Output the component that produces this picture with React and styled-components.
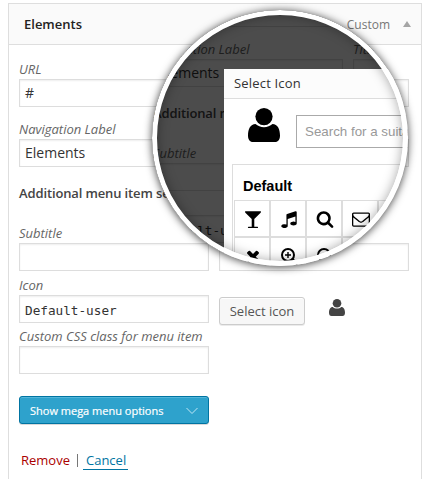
import React from "react";
import styled, { createGlobalStyle, css } from "styled-components";

const GlobalStyle = createGlobalStyle`
  * { box-sizing: border-box; }
  html, body { margin: 0; padding: 0; overflow: hidden; background: #fff; }
  body { font-family: "Open Sans", sans-serif; color: #333; }
`;

const Page = styled.main`
  position: relative;
  width: 427px;
  height: 479px;
  padding: 3px 0 0 8px;
  overflow: hidden;
`;

const Panel = styled.section`
  width: 414px;
  height: 490px;
  border: 1px solid #dedede;
  background: #fff;
`;

const PanelHeader = styled.header`
  display: flex;
  align-items: center;
  height: 41px;
  padding: 0 10px 0 15px;
  background: #fafafa;
  border-bottom: 1px solid #dedede;
`;

const PanelTitle = styled.h2`
  flex: 1;
  margin: 0;
  font-size: 13px;
  font-weight: 600;
  color: #222;
`;

const PanelType = styled.span`
  font-size: 12px;
  color: #777;
`;

const Caret = styled.span`
  margin-left: 13px;
  border: 4px solid transparent;
  border-top: 0;
  border-bottom: 6px solid #a5a5a5;
`;

const Form = styled.div`
  display: flex;
  flex-direction: column;
  padding: 14px 0 0 10px;
`;

const Row = styled.div`
  display: grid;
  grid-template-columns: 190px 190px;
  column-gap: 10px;
  height: ${(p) => p.$height}px;
`;

const Label = styled.label`
  display: block;
  height: 20px;
  font-size: 13px;
  font-style: italic;
  line-height: 20px;
  white-space: nowrap;
  color: #666;
`;

const TextBox = styled.div`
  height: 28px;
  padding-left: 5px;
  border: 1px solid #ddd;
  box-shadow: inset 0 1px 2px rgba(0, 0, 0, 0.07);
  font-size: 14px;
  line-height: 26px;
  color: #333;
  ${(p) => p.$mono && css`
    font-family: "DejaVu Sans Mono", monospace;
    font-size: 12.7px;
    line-height: 29px;
  `}
`;

const SectionTitle = styled.h3`
  height: 40px;
  margin: 0;
  font-size: 13px;
  font-weight: 600;
  letter-spacing: -0.13px;
  line-height: 20px;
  white-space: nowrap;
  color: #444;
`;

const PickerCell = styled.div`
  display: flex;
  align-items: flex-start;
  padding-top: 22px;
`;

const SelectButton = styled.button`
  width: 86px;
  height: 28px;
  padding: 0;
  border: 1px solid #ccc;
  border-radius: 3px;
  background: #f7f7f7;
  box-shadow: inset 0 1px 0 #fff, 0 1px 0 rgba(0, 0, 0, 0.08);
  font: 13px "Open Sans", sans-serif;
  color: #555;
`;

const PickedIcon = styled.div`
  margin: 2px 0 0 24px;
  color: #444;
  svg { display: block; }
`;

const Actions = styled.div`
  display: flex;
  flex-direction: column;
  padding-left: 10px;
`;

const MegaButton = styled.button`
  display: flex;
  align-items: center;
  justify-content: space-between;
  width: 190px;
  height: 28px;
  padding: 1px 10px 0;
  border: 1px solid #0074a2;
  border-radius: 3px;
  background: #2ea2cc;
  box-shadow: inset 0 1px 0 rgba(120, 200, 230, 0.5), 0 1px 0 rgba(0, 0, 0, 0.15);
  font: 500 11px "Open Sans", sans-serif;
  -webkit-text-stroke: 0.2px #fff;
  color: #fff;
`;

const Links = styled.div`
  display: flex;
  align-items: baseline;
  margin-top: 27px;
  padding-left: 2px;
  font-size: 13px;
  line-height: 18px;
`;

const RemoveLink = styled.a`
  color: #a00;
`;

const Divider = styled.span`
  align-self: center;
  width: 1px;
  height: 13px;
  margin: 0 5px 0 7px;
  background: #777;
`;

const CancelLink = styled.a`
  padding: 0 2px 0 3px;
  border-bottom: 1px solid #0074a2;
  color: #0074a2;
`;

const Lens = styled.div`
  position: absolute;
  left: 152px;
  top: 10px;
  width: 256px;
  height: 256px;
  border-radius: 50%;
  overflow: hidden;
  background: #fff;
`;

const LensShadow = styled.div`
  position: absolute;
  left: 152px;
  top: 10px;
  width: 256px;
  height: 256px;
  border-radius: 50%;
  box-shadow: 0 1px 8px rgba(0, 0, 0, 0.75);
`;

const LensRing = styled.div`
  position: absolute;
  inset: 0;
  border: 5px solid #fff;
  border-radius: 50%;
  box-shadow: inset 0 0 12px rgba(0, 0, 0, 0.35);
`;

/* The page behind the dialog, scrolled and shifted under the lens. */
const Backdrop = styled.div`
  position: absolute;
  left: -9px;
  top: -45px;
  width: 414px;
`;

const Dim = styled.div`
  position: absolute;
  inset: 0;
  background: rgba(0, 0, 0, 0.7);
`;

const Dialog = styled.div`
  position: absolute;
  left: 72px;
  top: 59px;
  width: 300px;
  height: 240px;
  background: #fff;
`;

const DialogHeader = styled.div`
  height: 30px;
  padding-left: 10px;
  border-bottom: 1px solid #ddd;
  background: #fcfcfc;
  font-size: 13px;
  font-weight: 500;
  letter-spacing: 0.18px;
  line-height: 29px;
  color: #333;
`;

const DialogSearch = styled.div`
  display: flex;
  padding: 6px 0 0 24px;
  height: 65px;
  svg { display: block; margin-top: 3px; color: #000; }
`;

const SearchBox = styled.div`
  width: 200px;
  height: 33px;
  margin: 10px 0 0 16px;
  padding-left: 8px;
  border: 1px solid #aaa;
  font: 13.33px/31px "Liberation Sans", Arial, sans-serif;
  color: #999;
  white-space: nowrap;
`;

const IconGroup = styled.div`
  width: 280px;
  height: 150px;
  margin-left: 8px;
  padding: 0 0 0 1px;
  border: 1px solid #ddd;
`;

const GroupTitle = styled.div`
  height: 35px;
  padding: 1px 0 0 9px;
  font: bold 14.5px/41px "Liberation Sans", Arial, sans-serif;
  color: #000;
`;

const IconGrid = styled.div`
  display: grid;
  grid-template-columns: repeat(5, 36px);
  grid-auto-rows: 37px;
  width: 181px;
  border-top: 1px solid #ddd;
  border-left: 1px solid #ddd;
`;

const IconCell = styled.div`
  display: flex;
  align-items: center;
  justify-content: center;
  padding: 1px 0 0 1px;
  border-right: 2px solid #ddd;
  border-bottom: 2px solid #ddd;
  color: #000;
`;

const PATHS = {
  glass: "M1699 186q0 35-43 78l-632 632v768h320q26 0 45 19t19 45-19 45-45 19h-896q-26 0-45-19t-19-45 19-45 45-19h320v-768l-632-632q-43-43-43-78 0-23 18-36.5t38-17.5 43-4h1408q23 0 43 4t38 17.5 18 36.5z",
  music: "M1664 224v1120q0 50-34 89t-86 60.5-103.5 32-96.5 10.5-96.5-10.5-103.5-32-86-60.5-34-89 34-89 86-60.5 103.5-32 96.5-10.5q105 0 192 39v-537l-768 237v709q0 50-34 89t-86 60.5-103.5 32-96.5 10.5-96.5-10.5-103.5-32-86-60.5-34-89 34-89 86-60.5 103.5-32 96.5-10.5q105 0 192 39v-967q0-31 19-56.5t49-35.5l832-256q12-4 28-4 40 0 68 28t28 68z",
  search: "M1216 832q0-185-131.5-316.5t-316.5-131.5-316.5 131.5-131.5 316.5 131.5 316.5 316.5 131.5 316.5-131.5 131.5-316.5zm512 832q0 52-38 90t-90 38q-54 0-90-38l-343-342q-179 124-399 124-143 0-273.5-55.5t-225-150-150-225-55.5-273.5 55.5-273.5 150-225 225-150 273.5-55.5 273.5 55.5 225 150 150 225 55.5 273.5q0 220-124 399l343 343q37 37 37 90z",
  envelope: "M1664 1504v-768q-32 36-69 66-268 206-426 338-51 43-83 67t-86.5 48.5-102.5 24.5h-2q-48 0-102.5-24.5t-86.5-48.5-83-67q-158-132-426-338-37-30-69-66v768q0 13 9.5 22.5t22.5 9.5h1472q13 0 22.5-9.5t9.5-22.5zm0-1051v-24.5l-.5-13-3-12.5-5.5-9-9-7.5-14-2.5h-1472q-13 0-22.5 9.5t-9.5 22.5q0 168 147 284 193 152 401 317 6 5 35 29.5t46 37.5 44.5 31.5 50.5 27.5 43 9h2q20 0 43-9t50.5-27.5 44.5-31.5 46-37.5 35-29.5q208-165 401-317 54-43 100.5-115.5t46.5-131.5zm128-37v1088q0 66-47 113t-113 47h-1472q-66 0-113-47t-47-113v-1088q0-66 47-113t113-47h1472q66 0 113 47t47 113z",
  times: "M1490 1322q0 40-28 68l-136 136q-28 28-68 28t-68-28l-294-294-294 294q-28 28-68 28t-68-28l-136-136q-28-28-28-68t28-68l294-294-294-294q-28-28-28-68t28-68l136-136q28-28 68-28t68 28l294 294 294-294q28-28 68-28t68 28l136 136q28 28 28 68t-28 68l-294 294 294 294q28 28 28 68z",
};

function Icon({ name, size }) {
  return (
    <svg width={size} height={size} viewBox="0 0 1792 1792" fill="currentColor">
      <path d={PATHS[name]} />
    </svg>
  );
}

function UserIcon({ width }) {
  return (
    <svg width={width} height={(width * 34) / 32} viewBox="0 0 32 34" fill="currentColor">
      <circle cx="16" cy="8.6" r="8.6" />
      <path d="M7.5 16C9.800 18 12.700 19.200 16 19.200S22.200 18 24.500 16C29.500 16 32 21 32 27.500C32 31.500 30.200 34 27 34H5C1.800 34 0 31.500 0 27.500C0 21 2.500 16 7.500 16Z" />
    </svg>
  );
}

function ZoomIcon({ plus }) {
  return (
    <svg width="18" height="18" viewBox="0 0 18 18" fill="none" stroke="currentColor" strokeWidth="2">
      <circle cx="8" cy="8" r="6" />
      <path d="M12.5 12.5l4 4" strokeWidth="2.6" strokeLinecap="round" />
      <path d={plus ? "M5 8h6M8 5v6" : "M5 8h6"} strokeWidth="1.4" />
    </svg>
  );
}

function Field({ label, value, mono }) {
  return (
    <div>
      <Label>{label}</Label>
      <TextBox $mono={mono}>{value}</TextBox>
    </div>
  );
}

function MenuItemForm({ url, titleAttribute }) {
  return (
    <Form>
      <Row $height={60}>
        <Field label={url && "URL"} value={url} />
        <Field />
      </Row>
      <Row $height={64}>
        <Field label="Navigation Label" value="Elements" />
        <Field label={titleAttribute} />
      </Row>
      <SectionTitle>Additional menu item settings</SectionTitle>
      <Row $height={52}>
        <Field label="Subtitle" />
        <Field />
      </Row>
      <Row $height={51}>
        <Field label={url && "Icon"} value="Default-user" mono />
        {url && (
          <PickerCell>
            <SelectButton>Select icon</SelectButton>
            <PickedIcon><UserIcon width={16} /></PickedIcon>
          </PickerCell>
        )}
      </Row>
      {url && (
        <Row $height={70}>
          <Field label="Custom CSS class for menu item" />
        </Row>
      )}
    </Form>
  );
}

export default function App() {
  return (
    <>
      <GlobalStyle />
      <Page>
        <Panel>
          <PanelHeader>
            <PanelTitle>Elements</PanelTitle>
            <PanelType>Custom</PanelType>
            <Caret />
          </PanelHeader>
          <MenuItemForm url="#" />
          <Actions>
            <MegaButton>
              Show mega menu options
              <svg width="12" height="8" viewBox="0 0 12 8" fill="none" stroke="#bfe6f5">
                <path d="M.5 1l5.5 5.5L11.5 1" />
              </svg>
            </MegaButton>
            <Links>
              <RemoveLink>Remove</RemoveLink>
              <Divider />
              <CancelLink>Cancel</CancelLink>
            </Links>
          </Actions>
        </Panel>
        <LensShadow />
        <Lens>
          <Backdrop><MenuItemForm titleAttribute="Title" /></Backdrop>
          <Dim />
          <Dialog>
            <DialogHeader>Select Icon</DialogHeader>
            <DialogSearch>
              <UserIcon width={32} />
              <SearchBox>Search for a suita</SearchBox>
            </DialogSearch>
            <IconGroup>
              <GroupTitle>Default</GroupTitle>
              <IconGrid>
                <IconCell><Icon name="glass" size={18} /></IconCell>
                <IconCell><Icon name="music" size={18} /></IconCell>
                <IconCell><Icon name="search" size={18} /></IconCell>
                <IconCell><Icon name="envelope" size={18} /></IconCell>
                <IconCell />
                <IconCell><Icon name="times" size={18} /></IconCell>
                <IconCell><ZoomIcon plus /></IconCell>
                <IconCell><ZoomIcon /></IconCell>
                <IconCell />
                <IconCell />
              </IconGrid>
            </IconGroup>
          </Dialog>
          <LensRing />
        </Lens>
      </Page>
    </>
  );
}
